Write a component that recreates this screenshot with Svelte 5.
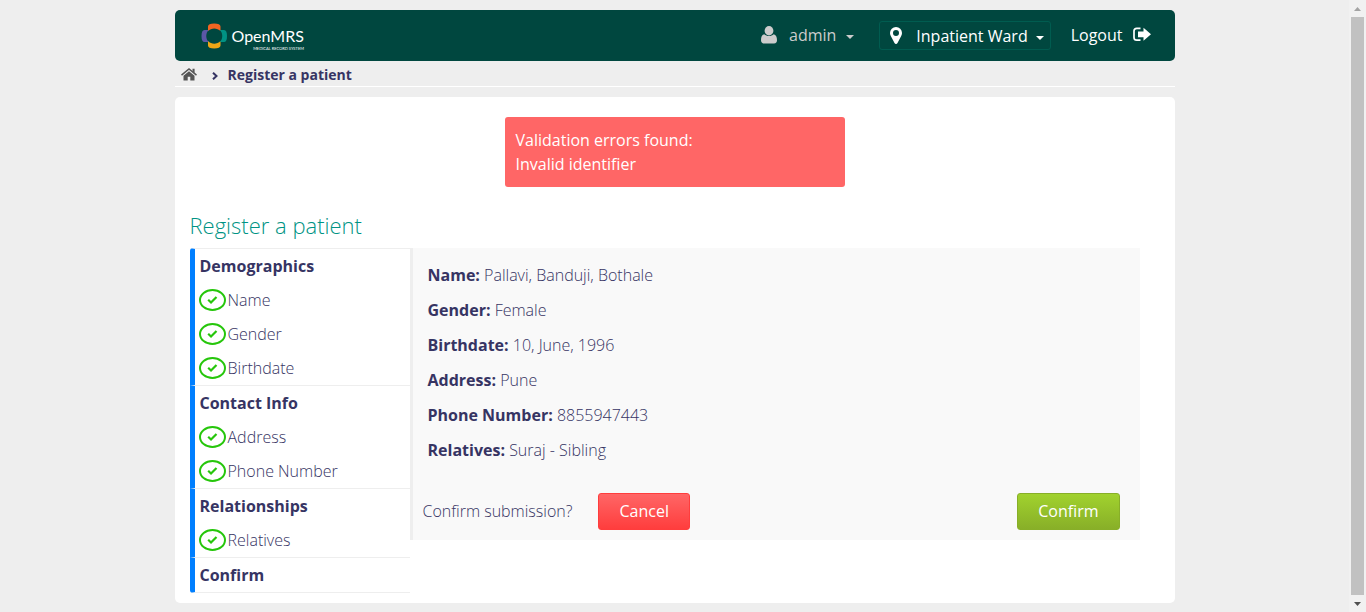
<script>
  const sections = [
    { title: 'Demographics', fields: ['Name', 'Gender', 'Birthdate'] },
    { title: 'Contact Info', fields: ['Address', 'Phone Number'] },
    { title: 'Relationships', fields: ['Relatives'] },
    { title: 'Confirm', fields: [] }
  ];
  const summary = [
    ['Name', 'Pallavi, Banduji, Bothale'],
    ['Gender', 'Female'],
    ['Birthdate', '10, June, 1996'],
    ['Address', 'Pune'],
    ['Phone Number', '8855947443'],
    ['Relatives', 'Suraj - Sibling']
  ];
</script>

<div class="window">
  <div class="page">
    <header>
      <a class="logo" href="#home">
        <svg width="27" height="26" viewBox="0 0 27 26" aria-hidden="true">
          <path fill="#f26522" d="M7 8V3.500Q7 .5 13.200 .5T19.500 3.500V8C16 4.500 10.500 4.500 7 8Z" />
          <path fill="#eea616" d="M7 18V22.500Q7 25.500 13.200 25.500T19.500 22.500V18C16 21.500 10.500 21.500 7 18Z" />
          <path fill="#5b57a6" d="M7.500 7H3.500Q.5 7 .5 13T3.500 19H7.500C4.500 15.500 4.500 10.500 7.500 7Z" />
          <path fill="#009384" d="M19 7H23Q26 7 26 13T23 19H19C22 15.500 22 10.500 19 7Z" />
        </svg>
        <span class="brand"><span class="name">OpenMRS</span><span class="tag">MEDICAL RECORD SYSTEM</span></span>
      </a>
      <nav>
        <button class="user" type="button">
          <svg width="16" height="18" viewBox="0 0 16 18" aria-hidden="true">
            <path fill="currentColor" d="M3.300 8.200C1 8.800 0 11 0 14.300C0 16.300 1 17.500 3 17.500H13C15 17.500 16 16.300 16 14.300C16 11 15 8.800 12.700 8.200C10.500 10.600 5.500 10.600 3.300 8.200Z" />
            <ellipse cx="8" cy="4.800" rx="4.400" ry="4.700" fill="currentColor" />
          </svg>
          <span>admin</span>
          <svg class="caret" width="8" height="4" viewBox="0 0 8 4" aria-hidden="true"><path fill="currentColor" d="M0 0H8L4 4Z" /></svg>
        </button>
        <button class="location" type="button">
          <svg width="12" height="17" viewBox="0 0 12 17" aria-hidden="true">
            <path fill="currentColor" fill-rule="evenodd" d="M6 0A6 6 0 0 1 12 6C12 7 11.700 8 11.200 9L7.500 16C7 17.200 5 17.200 4.500 16L.8 9C.3 8 0 7 0 6A6 6 0 0 1 6 0ZM6 3A3 3 0 1 0 6 9A3 3 0 0 0 6 3Z" />
          </svg>
          <span>Inpatient Ward</span>
          <svg class="caret" width="8" height="4" viewBox="0 0 8 4" aria-hidden="true"><path fill="currentColor" d="M0 0H8L4 4Z" /></svg>
        </button>
        <a class="logout" href="#logout">
          <span>Logout</span>
          <svg width="18" height="15" viewBox="0 0 18 15" aria-hidden="true">
            <path fill="none" stroke="currentColor" stroke-width="1.700" d="M7.500 1.300H3.800C2 1.300 1 2.300 1 4V10.500C1 12.200 2 13.200 3.800 13.200H7.500" />
            <path fill="currentColor" d="M5 4.500H10.500V.8L18 7.200L10.500 13.800V10.200H5Z" />
          </svg>
        </a>
      </nav>
    </header>

    <div class="crumbs">
      <a href="#home" aria-label="Home">
        <svg width="16" height="13" viewBox="0 0 16 13" aria-hidden="true">
          <path fill="#555" d="M8 3.200L13.500 7.700V12.500H9.300V8.700H6.700V12.500H2.500V7.700Z" />
          <path fill="#555" d="M11.500 .8H13.600V5L11.500 3.200Z" />
          <path fill="none" stroke="#555" stroke-width="1.500" d="M.5 7.200L8 1L15.500 7.200" />
        </svg>
      </a>
      <svg width="6" height="8" viewBox="0 0 6 8" aria-hidden="true"><path fill="none" stroke="#363463" stroke-width="2" d="M1 .7L4.500 4L1 7.300" /></svg>
      <span>Register a patient</span>
    </div>

    <main>
      <div class="error" role="alert">
        <div>Validation errors found:</div>
        <div>Invalid identifier</div>
      </div>
      <h1>Register a patient</h1>
      <div class="form">
        <ul class="steps">
          {#each sections as section}
            <li>
              <span class="title">{section.title}</span>
              {#if section.fields.length}
                <ul>
                  {#each section.fields as field}
                    <li>
                      <svg width="27" height="22" viewBox="0 0 27 22" aria-hidden="true">
                        <ellipse cx="13.500" cy="11" rx="12.500" ry="10" fill="#fff" stroke="#26c60b" stroke-width="2" />
                        <path fill="none" stroke="#26c60b" stroke-width="2.200" d="M9.200 10.800L12 13.500L17.500 8" />
                      </svg>
                      <span>{field}</span>
                    </li>
                  {/each}
                </ul>
              {/if}
            </li>
          {/each}
        </ul>
        <section>
          <div class="summary">
            {#each summary as [label, value]}
              <p><strong>{label}:</strong> {value}</p>
            {/each}
          </div>
          <div class="actions">
            <span>Confirm submission?</span>
            <button class="cancel" type="button">Cancel</button>
            <button class="confirm" type="button">Confirm</button>
          </div>
        </section>
      </div>
    </main>
  </div>
  <div class="scrollbar" aria-hidden="true">
    <svg width="17" height="17" viewBox="0 0 17 17"><path fill="#a3a3a3" d="M5 11L8.500 7L12 11Z" /></svg>
    <div class="thumb"></div>
    <svg width="17" height="17" viewBox="0 0 17 17"><path fill="#505050" d="M5 7L8.500 11L12 7Z" /></svg>
  </div>
</div>

<style>
  :global(body) {
    background: #eee;
  }
  .window {
    display: flex;
    min-height: 100vh;
    font: 300 16px/24px "Open Sans", sans-serif;
    color: #363463;
  }
  .window * {
    box-sizing: border-box;
  }
  .page {
    flex: 1;
    max-width: 1000px;
    margin: 0 auto;
    padding: 10px 0 9px;
  }
  header {
    display: flex;
    align-items: center;
    justify-content: space-between;
    height: 51px;
    padding: 0 24px 0 26px;
    border-radius: 5px;
    background: #00473f;
    color: #fff;
  }
  a {
    color: inherit;
    text-decoration: none;
  }
  button {
    font: inherit;
    cursor: pointer;
  }
  .logo {
    display: flex;
    align-items: center;
    gap: 4px;
  }
  .brand {
    display: flex;
    flex-direction: column;
    align-items: flex-end;
    padding-top: 5px;
  }
  .name {
    font: 400 16px/20px Lato, sans-serif;
  }
  .tag {
    font: 400 4px/5px Lato, sans-serif;
  }
  nav {
    display: flex;
    align-items: center;
    font-weight: 400;
  }
  nav button {
    display: flex;
    align-items: center;
    height: 29px;
    border: 0;
    background: none;
    color: inherit;
  }
  .user {
    gap: 12px;
    padding: 0 0 2px;
    margin-right: 25px;
    color: #ccc;
  }
  .user .caret {
    margin: 4px 0 0 -2px;
  }
  .location {
    gap: 14px;
    padding: 0 6px 0 10px;
    border: 1px solid #005c50;
    border-radius: 3px;
    margin-right: 20px;
  }
  .location .caret {
    margin: 4px 0 0 -6px;
  }
  .logout {
    display: flex;
    align-items: center;
    gap: 10px;
    padding-bottom: 2px;
  }
  .crumbs {
    display: flex;
    align-items: center;
    height: 26px;
    padding: 2px 6px 0;
    border-bottom: 1px solid #fff;
    font-size: 14px;
    font-weight: 700;
  }
  .crumbs a {
    display: flex;
  }
  .crumbs > svg {
    margin: 2px 10px 0 15px;
  }
  main {
    margin-top: 10px;
    padding: 20px 35px 10px 15px;
    border-radius: 5px;
    background: #fff;
  }
  .error {
    width: 340px;
    max-width: 100%;
    margin: 0 auto;
    padding: 11px;
    border-radius: 3px;
    background: #f66;
    color: #fff;
    font-weight: 400;
    position: relative;
    left: 10px;
  }
  h1 {
    margin: 23px 0 8px;
    font-size: 22px;
    font-weight: 300;
    line-height: 30px;
    color: #009384;
  }
  .form {
    display: flex;
    align-items: flex-start;
  }
  ul {
    margin: 0;
    padding: 0;
    list-style: none;
  }
  .steps {
    flex: 0 0 220px;
    border-radius: 3px 0 0 3px;
    overflow: hidden;
  }
  .steps > li {
    border-left: 5px solid #007fff;
    border-top: 1px solid #eee;
  }
  .steps > li:last-child {
    border-bottom: 1px solid #eee;
  }
  .title {
    display: block;
    padding-left: 5px;
    font-weight: 700;
    line-height: 34px;
  }
  .steps ul li {
    display: flex;
    align-items: center;
    gap: 2px;
    height: 34px;
    padding-left: 4px;
  }
  section {
    flex: 1;
    padding: 10px;
    border-left: 3px solid #eee;
    background: #f9f9f9;
  }
  .summary {
    padding: 0 5px;
  }
  p {
    margin: 0;
    line-height: 35px;
  }
  strong {
    font-weight: 700;
  }
  .actions {
    display: flex;
    align-items: center;
    margin-top: 25px;
    padding-right: 10px;
  }
  .actions span {
    padding-bottom: 2px;
  }
  .actions button {
    height: 37px;
    padding: 0 20px 2px;
    border: 1px solid;
    border-radius: 3px;
    color: #fff;
    font-weight: 400;
  }
  .actions .cancel {
    margin-left: 26px;
    border-color: #ff3d3d;
    background: linear-gradient(#f66, #ff3d3d);
  }
  .actions .confirm {
    margin-left: auto;
    border-color: #88af28;
    background: linear-gradient(#a1d22e, #88af28);
  }
  .scrollbar {
    display: flex;
    flex-direction: column;
    width: 17px;
    height: 100vh;
    background: #f1f1f1;
  }
  .thumb {
    flex: 1;
    margin: 0 2px;
    background: #c1c1c1;
  }
</style>
